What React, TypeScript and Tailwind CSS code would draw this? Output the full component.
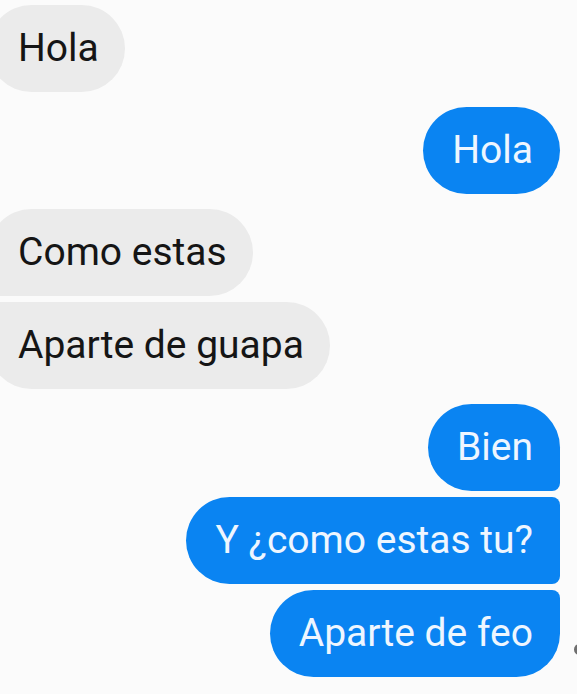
import React from "react";

type Msg = { text: string; mine: boolean; corners: string; gap: string };

const msgs: Msg[] = [
  { text: "Hola", mine: false, corners: "rounded-[44px]", gap: "mt-[5px]" },
  { text: "Hola", mine: true, corners: "rounded-[44px]", gap: "mt-[15px]" },
  { text: "Como estas", mine: false, corners: "rounded-[44px] rounded-bl-[8px]", gap: "mt-[15px]" },
  { text: "Aparte de guapa", mine: false, corners: "rounded-[44px] rounded-tl-[8px]", gap: "mt-[6px]" },
  { text: "Bien", mine: true, corners: "rounded-[44px] rounded-br-[8px]", gap: "mt-[15px]" },
  { text: "Y ¿como estas tu?", mine: true, corners: "rounded-[44px] rounded-tr-[8px] rounded-br-[8px]", gap: "mt-[6px]" },
  { text: "Aparte de feo", mine: true, corners: "rounded-[44px] rounded-tr-[8px]", gap: "mt-[6px]" },
];

export default function App() {
  return (
    <div
      className="relative w-[577px] h-[694px] overflow-hidden bg-[#fbfbfb] flex flex-col"
      style={{ fontFamily: "Roboto, 'Noto Sans', sans-serif" }}
    >
      {msgs.map((m, i) => (
        <div key={i} className={`${m.gap} flex ${m.mine ? "justify-end pr-[17px]" : "justify-start -ml-[12px]"}`}>
          <div
            className={`h-[87px] flex items-center text-[39px] leading-none ${m.corners} ${
              m.mine
                ? "bg-[#0a84f2] text-[#eef6ff] pl-[29px] pr-[27px]"
                : "bg-[#ebebeb] text-[#151515] pl-[30px] pr-[26px]"
            }`}
          >
            {m.text}
          </div>
        </div>
      ))}
      {/* read receipt peeking at the edge */}
      <div className="absolute right-[-8px] top-[644px] w-[11px] h-[11px] rounded-full bg-[#6f6f6f]" />
    </div>
  );
}
